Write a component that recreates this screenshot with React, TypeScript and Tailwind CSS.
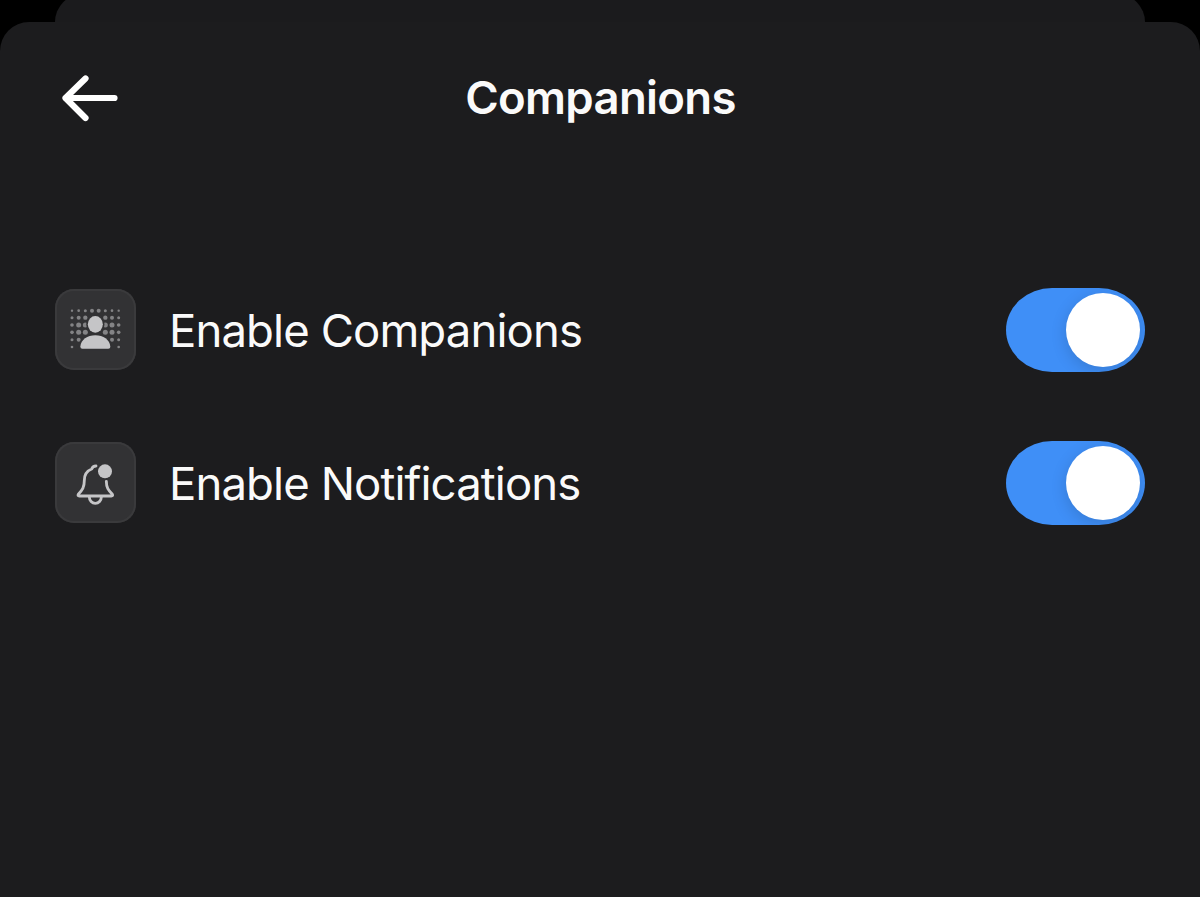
import React, { FC, ReactNode, useState } from 'react';

// dots behind the avatar: x, y, radius
const dots = [
  [51, 64, 3.5], [71, 64, 4], [91, 64, 4.5], [111, 64, 6], [131, 64, 6], [151, 64, 4.5], [171, 64, 4], [191, 64, 3.5],
  [51, 85, 4.5], [71, 85, 6], [91, 85, 6.5], [111, 85, 6], [131, 85, 6], [151, 85, 6.5], [171, 85, 6], [191, 85, 4.5],
  [51, 107, 5.5], [71, 107, 7.5], [91, 107, 7.5], [151, 107, 7.5], [171, 107, 7.5], [191, 107, 5.5],
  [51, 129, 5.5], [71, 129, 7.5], [91, 129, 7.5], [151, 129, 7.5], [171, 129, 7.5], [191, 129, 5.5],
  [51, 151, 4.5], [71, 151, 6], [171, 151, 6], [191, 151, 4.5],
  [51, 173, 4], [191, 173, 4],
];

const body = 'M76 172C78 151 97 138 121 138s43 13 45 34q0 6-6 6H82q-6 0-6-6z';

const BackArrow: FC = () => (
  <svg className="h-[50px] w-[60px]" viewBox="0 0 60 50" fill="none" stroke="#fff" strokeWidth="6.2" strokeLinecap="round" strokeLinejoin="round">
    <path d="M54.5 25H5.5M25.5 5.5 5.5 25 25.5 45" />
  </svg>
);

const CompanionIcon: FC = () => (
  <svg className="size-full" viewBox="0 -1 243 243">
    <g fill="#838385">
      {dots.map(([x, y, r]) => <circle key={`${x}-${y}`} cx={x} cy={y} r={r} />)}
    </g>
    <g fill="#c5c5c7" stroke="#323234" strokeWidth="10" paintOrder="stroke">
      <ellipse cx="121" cy="105" rx="22.5" ry="25" />
      <path d={body} />
    </g>
  </svg>
);

const BellIcon: FC = () => (
  <svg className="size-full" viewBox="0 -1 243 243" fill="none" stroke="#c5c5c7" strokeWidth="8.5" strokeLinecap="round" strokeLinejoin="round">
    <path d="M123 71Q113 71 110 80C95 86 88 98 88 114C88 136 82 143 70 156Q67 161 73 161H169Q175 161 172 156C160 143 154 136 154 117" />
    <path d="M103 164a18 19 0 0 0 36 0" />
    <circle cx="150" cy="87" r="21" fill="#c5c5c7" stroke="none" />
  </svg>
);

const Toggle: FC<{ label: string }> = ({ label }) => {
  const [on, setOn] = useState(true);

  return (
    <button
      aria-checked={on}
      aria-label={label}
      className={`flex h-[84px] w-[139px] items-center overflow-hidden rounded-[46px/42px] px-[5px] pb-px ${on ? 'justify-end bg-[#3f8ff7]' : 'justify-start bg-[#39393d]'}`}
      onClick={() => setOn(!on)}
      role="switch"
      type="button"
    >
      <span className="size-[74px] rounded-full bg-white shadow-[0_4px_16px_rgba(0,0,0,0.15)]" />
    </button>
  );
};

const Row: FC<{ icon: ReactNode; label: string }> = ({ icon, label }) => (
  <div className="flex h-[84px] items-center">
    <div className="mb-[2px] size-[81px] shrink-0 rounded-[19px] bg-[#323234] shadow-[inset_0_0_0_2px_#3a3a3c]">
      {icon}
    </div>
    <span className="ml-[33px] flex-1 pt-[2px] text-[45.5px] leading-[56px] tracking-[-0.9px]">{label}</span>
    <Toggle label={label} />
  </div>
);

const App: FC = () => (
  <div className="flex h-[897px] w-[1200px] flex-col overflow-hidden bg-black font-['Inter',sans-serif] text-[#fafafa]">
    <div className="-mt-[6px] mx-[55px] h-7 shrink-0 rounded-t-[28px] bg-[#1b1b1d]" />
    <div className="flex-1 rounded-t-[29px] bg-[#1c1c1e] px-[55px]">
      <header className="grid h-[152px] grid-cols-[60px_1fr_60px] items-center">
        <button aria-label="Back" className="pl-[5px]" type="button">
          <BackArrow />
        </button>
        <h1 className="pl-px text-center text-[45.5px] font-semibold leading-[56px] tracking-[-0.7px]">Companions</h1>
      </header>
      <main className="flex flex-col gap-[69px] pt-[114px]">
        <Row icon={<CompanionIcon />} label="Enable Companions" />
        <Row icon={<BellIcon />} label="Enable Notifications" />
      </main>
    </div>
  </div>
);

export default App;
